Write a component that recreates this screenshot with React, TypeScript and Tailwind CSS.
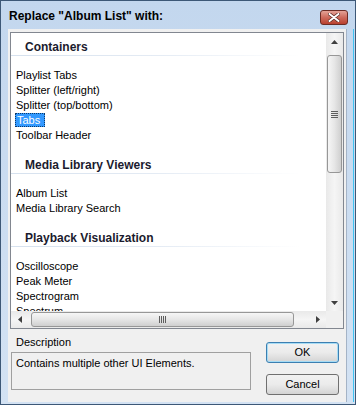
const groups = [
  {
    title: "Containers",
    items: ["Playlist Tabs", "Splitter (left/right)", "Splitter (top/bottom)", "Tabs", "Toolbar Header"],
  },
  {
    title: "Media Library Viewers",
    items: ["Album List", "Media Library Search"],
  },
  {
    title: "Playback Visualization",
    items: ["Oscilloscope", "Peak Meter", "Spectrogram", "Spectrum"],
  },
];

function Arrow({ dir }: { dir: "up" | "down" | "left" | "right" }) {
  const pts = {
    up: "0,4 3.5,0 7,4",
    down: "0,0 7,0 3.5,4",
    left: "4,0 4,7 0,3.5",
    right: "0,0 0,7 4,3.5",
  }[dir];
  const horiz = dir === "left" || dir === "right";
  return (
    <svg width={horiz ? 4 : 7} height={horiz ? 7 : 4} viewBox={horiz ? "0 0 4 7" : "0 0 7 4"}>
      <polygon points={pts} fill="#3f3f3f" />
    </svg>
  );
}

function VScroll() {
  return (
    <div className="w-[17px] flex flex-col bg-gradient-to-r from-[#e9e9e9] via-[#f5f5f5] to-[#e9e9e9]">
      <div className="h-[17px] flex items-center justify-center">
        <Arrow dir="up" />
      </div>
      <div className="mt-[5px] mx-[1px] h-[118px] rounded-[3px] border border-[#979797] bg-gradient-to-r from-[#f6f6f6] via-[#e6e6e6] to-[#cfcfcf] flex items-center justify-center">
        <div className="flex flex-col gap-[1px]">
          <div className="w-[7px] h-[1px] bg-[#5e5e5e]" />
          <div className="w-[7px] h-[1px] bg-[#5e5e5e]" />
          <div className="w-[7px] h-[1px] bg-[#5e5e5e]" />
          <div className="w-[7px] h-[1px] bg-[#5e5e5e]" />
        </div>
      </div>
      <div className="flex-1" />
      <div className="h-[17px] flex items-center justify-center">
        <Arrow dir="down" />
      </div>
    </div>
  );
}

function HScroll() {
  return (
    <div className="h-[17px] flex bg-gradient-to-b from-[#e9e9e9] via-[#f5f5f5] to-[#e9e9e9]">
      <div className="w-[17px] flex items-center justify-center">
        <Arrow dir="left" />
      </div>
      <div className="ml-[3px] my-[1px] w-[263px] rounded-[3px] border border-[#979797] bg-gradient-to-b from-[#f6f6f6] via-[#e6e6e6] to-[#cfcfcf] flex items-center justify-center">
        <div className="flex gap-[1px]">
          <div className="w-[1px] h-[7px] bg-[#5e5e5e]" />
          <div className="w-[1px] h-[7px] bg-[#5e5e5e]" />
          <div className="w-[1px] h-[7px] bg-[#5e5e5e]" />
          <div className="w-[1px] h-[7px] bg-[#5e5e5e]" />
        </div>
      </div>
      <div className="flex-1" />
      <div className="w-[17px] flex items-center justify-center">
        <Arrow dir="right" />
      </div>
    </div>
  );
}

function Button({ label, primary }: { label: string; primary?: boolean }) {
  return (
    <div
      className={
        "w-[73px] h-[21px] rounded-[3px] border flex items-center justify-center text-black bg-gradient-to-b from-[#f2f2f2] via-[#ebebeb] to-[#d4d4d4] " +
        (primary ? "border-[#3c7fb1] shadow-[inset_0_0_0_1px_#a6dcf5]" : "border-[#707070]")
      }
    >
      {label}
    </div>
  );
}

export default function App() {
  return (
    <div className="w-[356px] h-[405px] flex flex-col border border-[#3d5877] bg-gradient-to-b from-[#c3d7ee] to-[#d3e2f3] font-['Liberation_Sans',Arial,sans-serif] text-[11px] text-black">
      <div className="h-[28px] flex items-center justify-between pl-[8px] pr-[7px]">
        <span className="font-bold text-[12px] pt-[2px]">Replace "Album List" with:</span>
        <div className="w-[28px] h-[15px] mt-[4px] rounded-[3px] border border-[#6b2c25] bg-gradient-to-b from-[#e3a297] via-[#cd6a5c] to-[#b8402f] flex items-center justify-center">
          <svg width="12" height="9" viewBox="0 0 12 9">
            <path d="M1.5 1 L10.5 8 M10.5 1 L1.5 8" stroke="#5a2a25" strokeWidth="3.4" strokeLinecap="round" />
            <path d="M1.5 1 L10.5 8 M10.5 1 L1.5 8" stroke="#ffffff" strokeWidth="2" strokeLinecap="round" />
          </svg>
        </div>
      </div>
      <div className="flex-1 flex mb-[2px]">
        <div className="flex-1 ml-[7px] mr-[6px] border-r border-[#a4b3c6] bg-[#f0f0f0] flex flex-col px-[2px] pt-[3px]">
          <div className="h-[297px] border border-[#828790] bg-white flex flex-col">
            <div className="flex-1 flex overflow-hidden">
              <div className="flex-1 overflow-hidden pt-[7px]">
                {groups.map((g, gi) => (
                  <div key={g.title} className={gi === 0 ? "" : "mt-[15px]"}>
                    <div className="h-[15px] leading-[15px] pl-[14px] font-bold text-[12px] text-[#1b1b2e]">
                      {g.title}
                    </div>
                    <div className="h-[1px] w-[290px] bg-gradient-to-r from-[#d6e1ee] via-[#e4ebf4] to-white" />
                    <div className="mt-[12px] flex flex-col">
                      {g.items.map((it) => (
                        <div key={it} className="h-[15px] leading-[15px] pl-[4px] whitespace-nowrap">
                          {it === "Tabs" ? (
                            <span className="inline-block h-[14px] leading-[12px] px-[1px] bg-[#3399ff] text-white border border-dotted border-[#0b3a6b]">
                              Tabs&nbsp;
                            </span>
                          ) : (
                            <span className="pl-[1px]">{it}</span>
                          )}
                        </div>
                      ))}
                    </div>
                  </div>
                ))}
              </div>
              <VScroll />
            </div>
            <div className="flex">
              <div className="flex-1">
                <HScroll />
              </div>
              <div className="w-[17px] h-[17px] bg-[#f0f0f0]" />
            </div>
          </div>
          <div className="flex mt-[5px]">
            <div className="flex flex-col">
              <span className="pl-[6px] h-[16px] leading-[16px]">Description</span>
              <div className="ml-[1px] mt-[2px] w-[240px] h-[38px] border border-[#a0a0a0] px-[4px] pt-[2px]">
                Contains multiple other UI Elements.
              </div>
            </div>
            <div className="ml-auto mr-[5px] mt-[8px] flex flex-col gap-[11px]">
              <Button label="OK" primary />
              <Button label="Cancel" />
            </div>
          </div>
        </div>
        <div className="w-[1px] bg-[#3fc3f3] mr-[1px]" />
      </div>
    </div>
  );
}
